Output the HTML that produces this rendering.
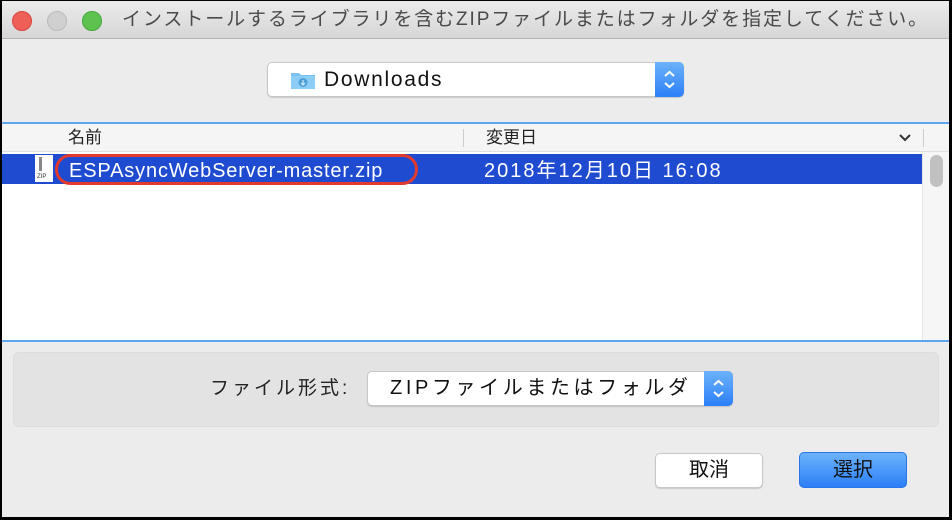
<!DOCTYPE html>
<html><head><meta charset="utf-8"><style>
*{margin:0;padding:0;box-sizing:border-box}
body{width:952px;height:520px;background:#000;position:relative;overflow:hidden;font-family:"Liberation Sans","Noto Sans CJK JP",sans-serif}
.win{position:absolute;left:2px;top:1px;width:947px;height:516px;background:#ececec;overflow:hidden}
.title{position:absolute;left:0;top:0;width:100%;height:38px;background:linear-gradient(#ebebeb,#d6d6d6);border-bottom:1px solid #b5b5b5}
.dot{position:absolute;top:10px;width:20px;height:20px;border-radius:50%}
.tt{position:absolute;left:120px;top:0;line-height:38px;font-size:19px;letter-spacing:1.9px;color:#4a4a4a;white-space:nowrap}
.abs{position:absolute}
.pop{background:#fff;border:1px solid #c8c8c8;border-radius:5px;box-shadow:0 1px 1px rgba(0,0,0,.15)}
.arr{position:absolute;top:-1px;right:-1px;bottom:-1px;width:29px;background:linear-gradient(#6cb3fa,#2c7ff8);border-radius:0 5px 5px 0}
</style></head><body>
<div class="win">
<div class="title">
<div class="dot" style="left:10px;background:#ee5f57;border:1px solid #d8473f"></div>
<div class="dot" style="left:45px;background:#d0d0d0;border:1px solid #bbb"></div>
<div class="dot" style="left:80px;background:#5ec24e;border:1px solid #47a73b"></div>
<div class="tt">インストールするライブラリを含むZIPファイルまたはフォルダを指定してください。</div>
</div>
<div class="abs pop" style="left:265px;top:61px;width:417px;height:35px">
<svg class="abs" style="left:22px;top:7px" width="26" height="20"><path d="M1 3h8l2 2h14v14H1z" fill="#7bc2f2"/><rect x="1" y="6" width="24" height="13" fill="#8ccdf6"/><circle cx="13" cy="12.5" r="4.5" fill="#4d9fd8"/><path d="M13 10v5M11 13l2 2 2-2" stroke="#cfeaff" stroke-width="1.2" fill="none"/></svg>
<div class="abs" style="left:56px;top:0;line-height:33px;font-size:21px;letter-spacing:1.7px;color:#111">Downloads</div>
<div class="arr"><svg width="29" height="35"><path d="M10 14l4.5-4 4.5 4M10 21l4.5 4 4.5-4" stroke="#fff" stroke-width="2" fill="none"/></svg></div>
</div>
<div class="abs" style="left:0;top:121px;width:947px;height:2px;background:#5aa7ef"></div>
<div class="abs" style="left:0;top:123px;width:947px;height:217px;background:#fff"></div>
<div class="abs" style="left:0;top:123px;width:947px;height:28px;background:#f5f5f5;border-bottom:1px solid #e0e0e0"></div>
<div class="abs" style="left:66px;top:123px;line-height:28px;font-size:17px;color:#222">名前</div>
<div class="abs" style="left:461px;top:128px;width:1px;height:18px;background:#ccc"></div>
<div class="abs" style="left:484px;top:123px;line-height:28px;font-size:17px;color:#222">変更日</div>
<svg class="abs" style="left:896px;top:132px" width="14" height="10"><path d="M2 2l5 5 5-5" stroke="#333" stroke-width="2" fill="none"/></svg>
<div class="abs" style="left:921px;top:128px;width:1px;height:18px;background:#ccc"></div>
<div class="abs" style="left:0;top:153px;width:920px;height:30px;background:#1f4bd1"></div>
<div class="abs" style="left:33px;top:154px;width:18px;height:27px;background:#fff"><div style="position:absolute;left:4px;top:2px;width:3px;height:14px;background:#888"></div><div style="position:absolute;left:2px;top:19px;font-size:6px;color:#333">ZIP</div></div>
<div class="abs" style="left:53px;top:153px;width:363px;height:31px;border:3px solid #e23a2c;border-radius:16px"></div>
<div class="abs" style="left:67px;top:155px;line-height:31px;font-size:20px;letter-spacing:0.85px;color:#fff;white-space:nowrap">ESPAsyncWebServer-master.zip</div>
<div class="abs" style="left:482px;top:155px;line-height:31px;font-size:20px;letter-spacing:2px;color:#fff;white-space:nowrap">2018年12月10日 16:08</div>
<div class="abs" style="left:920px;top:151px;width:27px;height:189px;background:#f6f6f6;border-left:1px solid #e6e6e6"></div>
<div class="abs" style="left:928px;top:154px;width:13px;height:32px;background:#c1c1c1;border-radius:7px"></div>
<div class="abs" style="left:0;top:339px;width:947px;height:2px;background:#5aa7ef"></div>
<div class="abs" style="left:11px;top:351px;width:926px;height:75px;background:#e3e3e3;border-radius:6px;border:1px solid #dcdcdc"></div>
<div class="abs" style="left:208px;top:370px;line-height:35px;font-size:19px;letter-spacing:3px;color:#222;white-space:nowrap">ファイル形式:</div>
<div class="abs pop" style="left:365px;top:370px;width:366px;height:35px">
<div class="abs" style="left:22px;top:0;line-height:33px;font-size:20px;letter-spacing:3.6px;color:#111;white-space:nowrap">ZIPファイルまたはフォルダ</div>
<div class="arr"><svg width="29" height="35"><path d="M10 14l4.5-4 4.5 4M10 21l4.5 4 4.5-4" stroke="#fff" stroke-width="2" fill="none"/></svg></div>
</div>
<div class="abs pop" style="left:653px;top:452px;width:108px;height:35px;text-align:center;font-size:20px;line-height:33px;color:#111">取消</div>
<div class="abs" style="left:797px;top:451px;width:108px;height:36px;border-radius:5px;background:linear-gradient(#6cb3fa,#2c7ff8);border:1px solid #2a76e6;text-align:center;font-size:20px;line-height:34px;color:#111">選択</div>
</div>
</body></html>
